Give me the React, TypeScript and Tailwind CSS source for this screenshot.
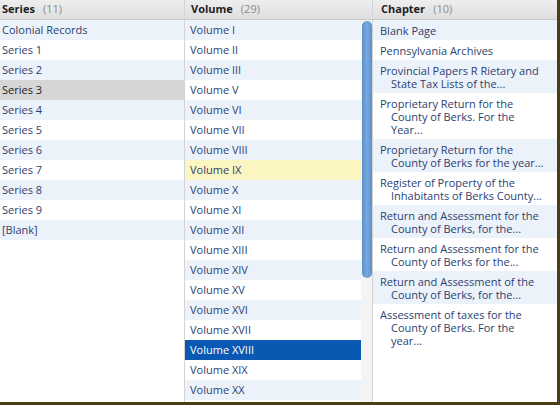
const series = ["Colonial Records", "Series 1", "Series 2", "Series 3", "Series 4", "Series 5", "Series 6", "Series 7", "Series 8", "Series 9", "[Blank]"]

const volumes = ["Volume I", "Volume II", "Volume III", "Volume V", "Volume VI", "Volume VII", "Volume VIII", "Volume IX", "Volume X", "Volume XI", "Volume XII", "Volume XIII", "Volume XIV", "Volume XV", "Volume XVI", "Volume XVII", "Volume XVIII", "Volume XIX", "Volume XX"]

const chapters = [
    ["Blank Page"],
    ["Pennsylvania Archives"],
    ["Provincial Papers R Rietary and", "State Tax Lists of the..."],
    ["Proprietary Return for the", "County of Berks. For the", "Year..."],
    ["Proprietary Return for the", "County of Berks for the year..."],
    ["Register of Property of the", "Inhabitants of Berks County..."],
    ["Return and Assessment for the", "County of Berks, for the..."],
    ["Return and Assessment for the", "County of Berks for the..."],
    ["Return and Assessment of the", "County of Berks, for the..."],
    ["Assessment of taxes for the", "County of Berks. For the", "year..."],
]

const Header = (props: { title: string; count: number; pad: string }) => (
    <div className={`h-[20px] flex items-center gap-[8px] border-b border-[#c9c9c9] bg-gradient-to-b from-[#eeeeee] to-[#dedede] ${props.pad}`}>
        <span className="font-bold text-[#1e1e1e]">{props.title}</span>
        <span className="text-[#8a8a8a]">({props.count})</span>
    </div>
)

const App = () => {
    return (
        <div
            className="w-[560px] h-[405px] overflow-hidden flex bg-white text-[11px] border-r-[3px] border-b-[3px] border-[#4a3e18]"
            style={{ fontFamily: '"Open Sans", "Noto Sans", sans-serif' }}
        >
            <div className="w-[185px] border-r border-[#d3d3d3] flex flex-col">
                <Header title="Series" count={11} pad="pl-[2px]" />
                {series.map((s, i) => (
                    <div
                        key={s}
                        className={`h-[20px] leading-[20px] pl-[2px] ${i === 3 ? "bg-[#d6d6d6] text-[#222]" : i % 2 === 0 ? "bg-[#ecf2fa] text-[#2c3f70]" : "text-[#2c3f70]"}`}
                    >
                        {s}
                    </div>
                ))}
            </div>
            <div className="w-[188px] border-r border-[#d3d3d3] flex flex-col">
                <Header title="Volume" count={29} pad="pl-[6px]" />
                <div className="flex flex-1 min-h-0">
                    <div className="w-[176px] flex flex-col">
                        {volumes.map((v, i) => (
                            <div
                                key={v}
                                className={`h-[20px] leading-[20px] pl-[5px] shrink-0 ${i === 16 ? "bg-[#0a58b2] text-white" : i === 7 ? "bg-[#fbf5c1] text-[#2c3f70]" : i % 2 === 0 ? "bg-[#ecf2fa] text-[#2c3f70]" : "text-[#2c3f70]"}`}
                            >
                                {v}
                            </div>
                        ))}
                    </div>
                    <div className="flex-1 bg-[#f4f4f4] pt-[1px] flex justify-center">
                        <div className="w-[10px] h-[257px] rounded-full bg-gradient-to-r from-[#5c8fca] via-[#79a8dd] to-[#5c8fca]" />
                    </div>
                </div>
            </div>
            <div className="flex-1 flex flex-col">
                <Header title="Chapter" count={10} pad="pl-[8px]" />
                {chapters.map((c, i) => (
                    <div
                        key={i}
                        className={`py-[3.5px] pl-[18px] pr-[4px] leading-[13px] text-[#2c3f70] ${i % 2 === 0 ? "bg-[#ecf2fa]" : ""}`}
                    >
                        {c.map((line, j) => (
                            <div key={j} className={j === 0 ? "-ml-[11px]" : ""}>{line}</div>
                        ))}
                    </div>
                ))}
            </div>
        </div>
    )
}

export default App
